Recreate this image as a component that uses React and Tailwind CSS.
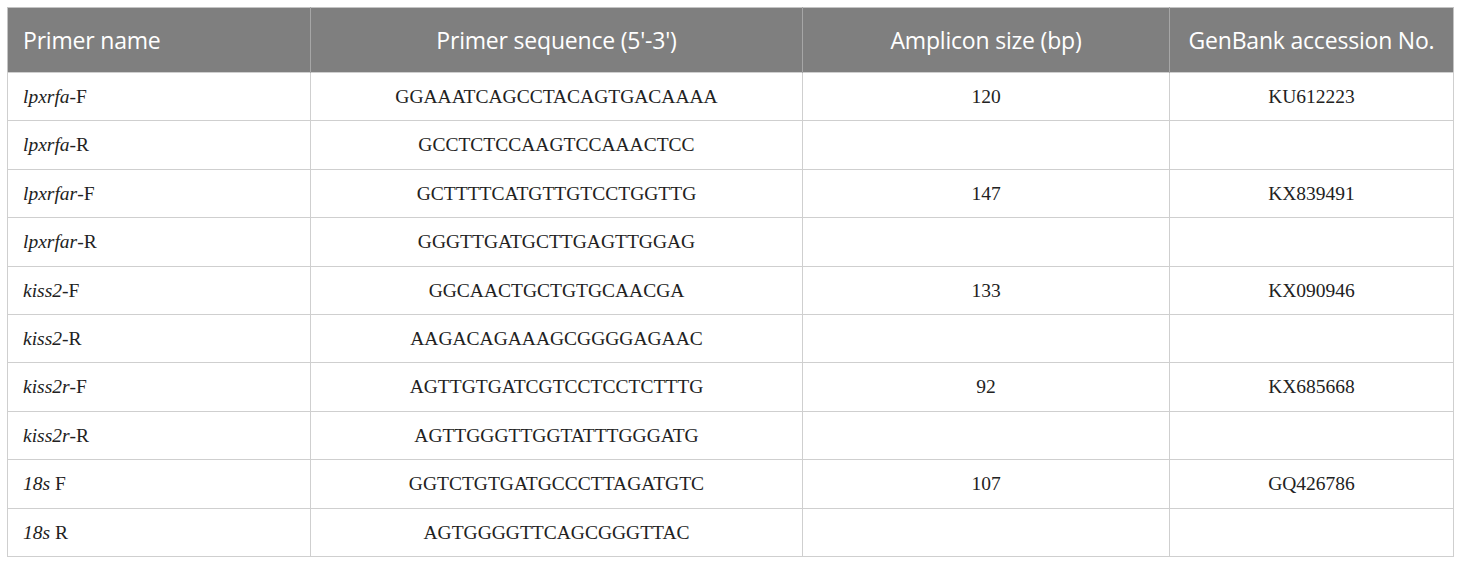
import React from 'react';

const ROWS = [
  { gene: 'lpxrfa', suffix: '-F', seq: 'GGAAATCAGCCTACAGTGACAAAA', size: '120', acc: 'KU612223' },
  { gene: 'lpxrfa', suffix: '-R', seq: 'GCCTCTCCAAGTCCAAACTCC', size: '', acc: '' },
  { gene: 'lpxrfar', suffix: '-F', seq: 'GCTTTTCATGTTGTCCTGGTTG', size: '147', acc: 'KX839491' },
  { gene: 'lpxrfar', suffix: '-R', seq: 'GGGTTGATGCTTGAGTTGGAG', size: '', acc: '' },
  { gene: 'kiss2', suffix: '-F', seq: 'GGCAACTGCTGTGCAACGA', size: '133', acc: 'KX090946' },
  { gene: 'kiss2', suffix: '-R', seq: 'AAGACAGAAAGCGGGGAGAAC', size: '', acc: '' },
  { gene: 'kiss2r', suffix: '-F', seq: 'AGTTGTGATCGTCCTCCTCTTTG', size: '92', acc: 'KX685668' },
  { gene: 'kiss2r', suffix: '-R', seq: 'AGTTGGGTTGGTATTTGGGATG', size: '', acc: '' },
  { gene: '18s', suffix: ' F', seq: 'GGTCTGTGATGCCCTTAGATGTC', size: '107', acc: 'GQ426786' },
  { gene: '18s', suffix: ' R', seq: 'AGTGGGGTTCAGCGGGTTAC', size: '', acc: '' },
];

const SERIF = "font-['Liberation_Serif',serif]";
const cell = 'border border-[#cfcfcf] px-[15px] align-middle';

export default function App() {
  return (
    <div className="min-h-screen bg-white p-[7px]">
      <table className="w-[1446px] table-fixed border-collapse border border-[#c4c4c4]">
        <colgroup>
          <col className="w-[303px]" />
          <col className="w-[492px]" />
          <col className="w-[367px]" />
          <col className="w-[284px]" />
        </colgroup>
        <thead>
          <tr className="h-[65px] bg-[#7f7f7f] font-['Open_Sans',sans-serif] text-[23px] font-normal tracking-[-0.2px] text-white">
            <th className="border-r border-[#a6a6a6] px-[15px] text-left font-normal">Primer name</th>
            <th className="border-r border-[#a6a6a6] px-[15px] text-center font-normal">Primer sequence (5'-3')</th>
            <th className="border-r border-[#a6a6a6] px-[15px] text-center font-normal">Amplicon size (bp)</th>
            <th className="px-[8px] text-center font-normal">GenBank accession No.</th>
          </tr>
        </thead>
        <tbody className={`${SERIF} text-[19.5px] text-[#222222]`}>
          {ROWS.map((row, idx) => (
            <tr key={idx} className="h-[48.4px]">
              <td className={`${cell} text-left`}>
                <i>{row.gene}</i>{row.suffix}
              </td>
              <td className={`${cell} text-center`}>{row.seq}</td>
              <td className={`${cell} text-center`}>{row.size}</td>
              <td className={`${cell} text-center`}>{row.acc}</td>
            </tr>
          ))}
        </tbody>
      </table>
    </div>
  );
}
